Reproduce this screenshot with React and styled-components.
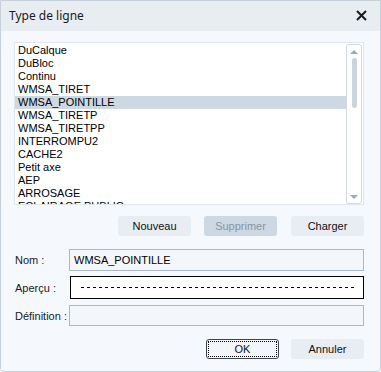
import React from "react";
import styled, { createGlobalStyle } from "styled-components";

const GlobalStyle = createGlobalStyle`
  html, body {
    margin: 0;
    padding: 0;
    background: #ffffff;
  }
  * {
    box-sizing: border-box;
  }
`;

const items = [
  "DuCalque",
  "DuBloc",
  "Continu",
  "WMSA_TIRET",
  "WMSA_POINTILLE",
  "WMSA_TIRETP",
  "WMSA_TIRETPP",
  "INTERROMPU2",
  "CACHE2",
  "Petit axe",
  "AEP",
  "ARROSAGE",
  "ECLAIRAGE PUBLIC",
];

const App = () => {
  const [selected, setSelected] = React.useState(4);

  return (
    <React.Fragment>
      <GlobalStyle />
      <Window>
        <TitleBar>
          <Title>Type de ligne</Title>
          <CloseButton>
            <svg width="11" height="11" viewBox="0 0 11 11">
              <path d="M1 1 L10 10 M10 1 L1 10" stroke="#1b1b1b" strokeWidth="2" />
            </svg>
          </CloseButton>
        </TitleBar>
        <Body>
          <ListBox>
            <Items>
              {items.map((l, i) => (
                <Item key={i} $active={i === selected} onClick={() => setSelected(i)}>
                  {l}
                </Item>
              ))}
            </Items>
            <Scrollbar>
              <Arrow>
                <svg width="8" height="4" viewBox="0 0 8 4">
                  <path d="M0 4 L4 0 L8 4 Z" fill="#9aaabb" />
                </svg>
              </Arrow>
              <Track>
                <Thumb />
              </Track>
              <Arrow>
                <svg width="8" height="4" viewBox="0 0 8 4">
                  <path d="M0 0 L4 4 L8 0 Z" fill="#9aaabb" />
                </svg>
              </Arrow>
            </Scrollbar>
          </ListBox>

          <ButtonRow>
            <Button>Nouveau</Button>
            <Button $disabled>Supprimer</Button>
            <Button $gap>Charger</Button>
          </ButtonRow>

          <Form>
            <Label>Nom :</Label>
            <Field $h={22}>WMSA_POINTILLE</Field>
            <Label>Aperçu :</Label>
            <Preview>
              <svg width="100%" height="3">
                <line x1="10" y1="1.5" x2="284" y2="1.5" stroke="#000" strokeWidth="1" strokeDasharray="3 3" />
              </svg>
            </Preview>
            <Label $shift>Définition :</Label>
            <Field $h={21} $shift />
          </Form>

          <Footer>
            <Button $focus>OK</Button>
            <Button $gap>Annuler</Button>
          </Footer>
        </Body>
      </Window>
    </React.Fragment>
  );
};

const Window = styled.div`
  width: 381px;
  height: 372px;
  border: 1px solid #c6d0da;
  border-radius: 0 0 4px 4px;
  background: #f5f9fd;
  display: flex;
  flex-direction: column;
  overflow: hidden;
`;

const TitleBar = styled.div`
  height: 30px;
  flex: none;
  background: #e8edf2;
  display: flex;
  align-items: center;
  justify-content: space-between;
  padding: 0 13px 0 8px;
`;

const Title = styled.div`
  font-family: "Noto Sans", "Open Sans", sans-serif;
  font-size: 12px;
  color: #1a1a1a;
  margin-top: -1px;
`;

const CloseButton = styled.div`
  display: flex;
  align-items: center;
  margin-top: -2px;
`;

const Body = styled.div`
  flex: 1;
  display: flex;
  flex-direction: column;
  padding: 11px 16px 0 13px;
`;

const ListBox = styled.div`
  height: 163px;
  background: #ffffff;
  border: 1px solid #dfe6ee;
  display: flex;
  overflow: hidden;
`;

const Items = styled.div`
  flex: 1;
  padding-top: 1px;
  overflow: hidden;
`;

const Item = styled.div`
  height: 13px;
  line-height: 13px;
  padding-left: 3px;
  font-family: "Liberation Sans", Arial, sans-serif;
  font-size: 11px;
  color: #000000;
  white-space: nowrap;
  background: ${(p) => (p.$active ? "#cdd8e3" : "transparent")};
  cursor: default;
`;

const Scrollbar = styled.div`
  width: 16px;
  margin: 1px 1px 0 0;
  border: 1px solid #cfd9e3;
  border-radius: 3px;
  display: flex;
  flex-direction: column;
  align-items: center;
`;

const Arrow = styled.div`
  height: 13px;
  display: flex;
  align-items: center;
  justify-content: center;
`;

const Track = styled.div`
  flex: 1;
  width: 100%;
  display: flex;
  justify-content: center;
`;

const Thumb = styled.div`
  width: 5px;
  height: 50px;
  border-radius: 3px;
  background: #c9d4df;
`;

const ButtonRow = styled.div`
  display: flex;
  justify-content: flex-end;
  gap: 13px;
  margin-top: 11px;
`;

const Button = styled.div`
  width: 73px;
  height: 20px;
  border-radius: 3px;
  display: flex;
  align-items: center;
  justify-content: center;
  font-family: "Liberation Sans", Arial, sans-serif;
  font-size: 11px;
  color: ${(p) => (p.$disabled ? "#8795a3" : "#111111")};
  background: ${(p) => (p.$disabled ? "#cdd8e3" : p.$focus ? "#f2f6fa" : "#e7edf3")};
  border: 1px solid ${(p) => (p.$focus ? "#3c4550" : "transparent")};
  outline: ${(p) => (p.$focus ? "1px dotted #000" : "none")};
  outline-offset: -3px;
  margin-left: ${(p) => (p.$gap ? "1px" : "0")};
  cursor: default;
`;

const Form = styled.div`
  display: grid;
  grid-template-columns: 55px 1fr;
  row-gap: 5px;
  align-items: center;
  margin-top: 13px;
`;

const Label = styled.div`
  font-family: "Liberation Sans", Arial, sans-serif;
  font-size: 11px;
  color: #1a1a1a;
  padding-left: 1px;
  margin-top: ${(p) => (p.$shift ? "1px" : "0")};
`;

const Field = styled.div`
  height: ${(p) => p.$h}px;
  margin-top: ${(p) => (p.$shift ? "1px" : "0")};
  border: 1px solid #abb9c7;
  background: #f3f7fb;
  display: flex;
  align-items: center;
  padding-left: 4px;
  font-family: "Liberation Sans", Arial, sans-serif;
  font-size: 11px;
  color: #000;
`;

const Preview = styled.div`
  height: 23px;
  margin-left: 1px;
  border: 1px solid #000000;
  background: #ffffff;
  display: flex;
  align-items: center;
`;

const Footer = styled.div`
  display: flex;
  justify-content: flex-end;
  gap: 11px;
  margin-top: 13px;
`;

export default App;
